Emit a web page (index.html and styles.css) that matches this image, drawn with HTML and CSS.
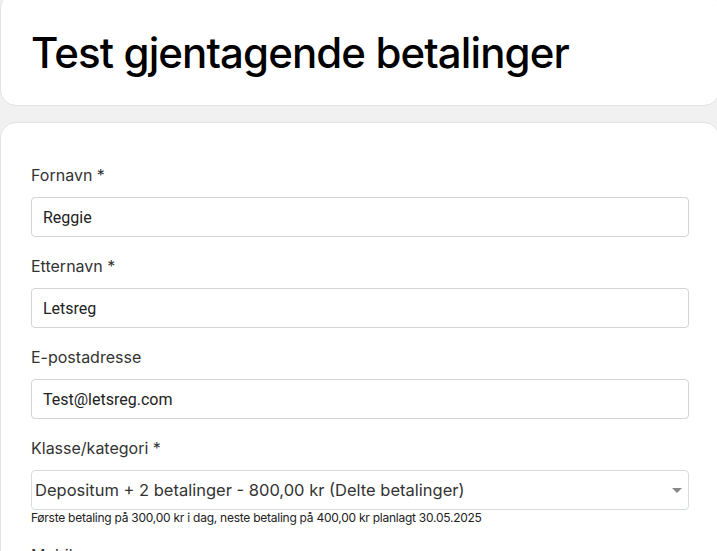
FILE: index.html
```html
<!DOCTYPE html>
<html lang="no">
<head>
    <meta charset="UTF-8">
    <meta name="viewport" content="width=device-width, initial-scale=1.0">
    <title>Test gjentagende betalinger</title>
    <link rel="stylesheet" href="styles.css">
</head>
<body>
    <div class="page">
        <div class="card header-card">
            <h1 class="title">Test gjentagende betalinger</h1>
        </div>

        <form class="card form-card">
            <div class="field">
                <label class="label" for="fornavn">Fornavn *</label>
                <input class="input" id="fornavn" type="text" value="Reggie">
            </div>

            <div class="field">
                <label class="label" for="etternavn">Etternavn *</label>
                <input class="input" id="etternavn" type="text" value="Letsreg">
            </div>

            <div class="field">
                <label class="label" for="epost">E-postadresse</label>
                <input class="input" id="epost" type="email" value="Test@letsreg.com">
            </div>

            <div class="field">
                <label class="label" for="klasse">Klasse/kategori *</label>
                <div class="select">
                    <span class="select-value">Depositum + 2 betalinger - 800,00 kr (Delte betalinger)</span>
                    <span class="select-arrow"></span>
                </div>
                <p class="help">Første betaling på 300,00 kr i dag, neste betaling på 400,00 kr planlagt 30.05.2025</p>
            </div>

            <div class="field">
                <label class="label" for="mobil">Mobilnummer</label>
                <input class="input" id="mobil" type="tel" value="">
            </div>
        </form>
    </div>
</body>
</html>
```

FILE: styles.css
```css
body {
    margin: 0;
    padding: 0;
    background: #f1f1f1;
    font-family: Inter, "Liberation Sans", sans-serif;
    color: #222;
    overflow: hidden;
}

.page {
    width: 720px;
    margin-top: -8px;
    display: flex;
    flex-direction: column;
    gap: 16px;
}

.card {
    background: #fff;
    border: 1px solid #e3e3e3;
    border-radius: 16px;
    padding: 30px;
}

.header-card {
    padding-top: 34px;
    padding-bottom: 26px;
}

.title {
    margin: 0;
    font-size: 42px;
    line-height: 52px;
    font-weight: 500;
    letter-spacing: -0.9px;
    color: #000;
}

.form-card {
    padding-top: 40px;
}

.field {
    margin-bottom: 17px;
}

.label {
    display: block;
    font-size: 16px;
    line-height: 24px;
    color: #333;
    margin-bottom: 10px;
}

.input {
    display: block;
    box-sizing: border-box;
    width: 100%;
    height: 40px;
    padding: 0 11px;
    border: 1px solid #d4d4d4;
    border-radius: 4px;
    font-family: Roboto, "Liberation Sans", sans-serif;
    font-size: 16px;
    color: #222;
    background: #fff;
}

.select {
    box-sizing: border-box;
    height: 40px;
    border: 1px solid #d6dbe0;
    border-radius: 4px;
    display: flex;
    align-items: center;
    justify-content: space-between;
    padding: 0 6px 0 3px;
}

.select-value {
    font-size: 16.5px;
    color: #333;
}

.select-arrow {
    width: 0;
    height: 0;
    border-left: 5px solid transparent;
    border-right: 5px solid transparent;
    border-top: 5px solid #888;
}

.help {
    margin: 0;
    font-size: 12px;
    line-height: 16px;
    letter-spacing: -0.25px;
    color: #222;
}
```
